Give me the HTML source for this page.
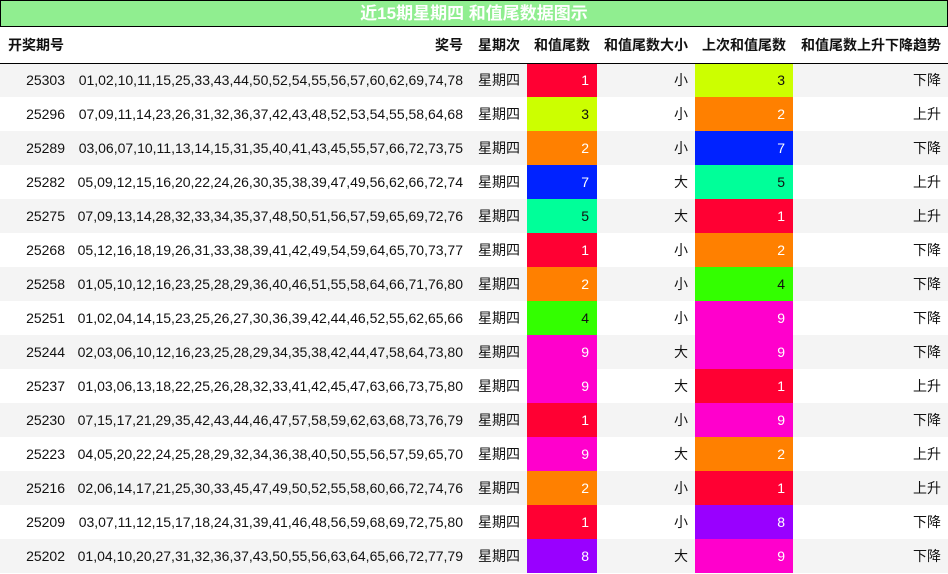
<!DOCTYPE html>
<html><head><meta charset="utf-8"><style>
*{margin:0;padding:0;box-sizing:border-box}
body{width:948px;height:574px;background:#fff;font-family:"Liberation Sans","Noto Sans CJK SC",sans-serif;font-size:14px;color:#111;overflow:hidden}
.t{height:27px;background:#90ee90;border:1px solid #000;color:#fff;font-weight:bold;font-size:17px;text-align:center;line-height:25px}
table{border-collapse:collapse;table-layout:fixed;width:948px}
th{height:36px;font-weight:bold;text-align:right;padding:0 7px 0 0;border-bottom:1px solid #000;font-size:14px}
td{height:34px;text-align:right;padding:0 7px 0 0;white-space:nowrap}
tr.g td{background:#f4f4f4}
td.c{padding-right:8px}
.w{color:#fff}
</style></head><body>
<div class="t">近15期星期四 和值尾数据图示</div>
<table>
<colgroup><col style="width:72px"><col style="width:398px"><col style="width:57px"><col style="width:70px"><col style="width:98px"><col style="width:98px"><col style="width:155px"></colgroup>
<tr><th style="text-align:left;padding-left:8px">开奖期号</th><th>奖号</th><th>星期次</th><th>和值尾数</th><th>和值尾数大小</th><th>上次和值尾数</th><th>和值尾数上升下降趋势</th></tr>
<tr class="g"><td>25303</td><td>01,02,10,11,15,25,33,43,44,50,52,54,55,56,57,60,62,69,74,78</td><td>星期四</td><td class="c w" style="background:#ff0033!important">1</td><td>小</td><td class="c" style="background:#ccff00!important">3</td><td>下降</td></tr>
<tr><td>25296</td><td>07,09,11,14,23,26,31,32,36,37,42,43,48,52,53,54,55,58,64,68</td><td>星期四</td><td class="c" style="background:#ccff00">3</td><td>小</td><td class="c w" style="background:#ff8000">2</td><td>上升</td></tr>
<tr class="g"><td>25289</td><td>03,06,07,10,11,13,14,15,31,35,40,41,43,45,55,57,66,72,73,75</td><td>星期四</td><td class="c w" style="background:#ff8000!important">2</td><td>小</td><td class="c w" style="background:#0022ff!important">7</td><td>下降</td></tr>
<tr><td>25282</td><td>05,09,12,15,16,20,22,24,26,30,35,38,39,47,49,56,62,66,72,74</td><td>星期四</td><td class="c w" style="background:#0022ff">7</td><td>大</td><td class="c" style="background:#00ff99">5</td><td>上升</td></tr>
<tr class="g"><td>25275</td><td>07,09,13,14,28,32,33,34,35,37,48,50,51,56,57,59,65,69,72,76</td><td>星期四</td><td class="c" style="background:#00ff99!important">5</td><td>大</td><td class="c w" style="background:#ff0033!important">1</td><td>上升</td></tr>
<tr><td>25268</td><td>05,12,16,18,19,26,31,33,38,39,41,42,49,54,59,64,65,70,73,77</td><td>星期四</td><td class="c w" style="background:#ff0033">1</td><td>小</td><td class="c w" style="background:#ff8000">2</td><td>下降</td></tr>
<tr class="g"><td>25258</td><td>01,05,10,12,16,23,25,28,29,36,40,46,51,55,58,64,66,71,76,80</td><td>星期四</td><td class="c w" style="background:#ff8000!important">2</td><td>小</td><td class="c" style="background:#33ff00!important">4</td><td>下降</td></tr>
<tr><td>25251</td><td>01,02,04,14,15,23,25,26,27,30,36,39,42,44,46,52,55,62,65,66</td><td>星期四</td><td class="c" style="background:#33ff00">4</td><td>小</td><td class="c w" style="background:#ff00cc">9</td><td>下降</td></tr>
<tr class="g"><td>25244</td><td>02,03,06,10,12,16,23,25,28,29,34,35,38,42,44,47,58,64,73,80</td><td>星期四</td><td class="c w" style="background:#ff00cc!important">9</td><td>大</td><td class="c w" style="background:#ff00cc!important">9</td><td>下降</td></tr>
<tr><td>25237</td><td>01,03,06,13,18,22,25,26,28,32,33,41,42,45,47,63,66,73,75,80</td><td>星期四</td><td class="c w" style="background:#ff00cc">9</td><td>大</td><td class="c w" style="background:#ff0033">1</td><td>上升</td></tr>
<tr class="g"><td>25230</td><td>07,15,17,21,29,35,42,43,44,46,47,57,58,59,62,63,68,73,76,79</td><td>星期四</td><td class="c w" style="background:#ff0033!important">1</td><td>小</td><td class="c w" style="background:#ff00cc!important">9</td><td>下降</td></tr>
<tr><td>25223</td><td>04,05,20,22,24,25,28,29,32,34,36,38,40,50,55,56,57,59,65,70</td><td>星期四</td><td class="c w" style="background:#ff00cc">9</td><td>大</td><td class="c w" style="background:#ff8000">2</td><td>上升</td></tr>
<tr class="g"><td>25216</td><td>02,06,14,17,21,25,30,33,45,47,49,50,52,55,58,60,66,72,74,76</td><td>星期四</td><td class="c w" style="background:#ff8000!important">2</td><td>小</td><td class="c w" style="background:#ff0033!important">1</td><td>上升</td></tr>
<tr><td>25209</td><td>03,07,11,12,15,17,18,24,31,39,41,46,48,56,59,68,69,72,75,80</td><td>星期四</td><td class="c w" style="background:#ff0033">1</td><td>小</td><td class="c w" style="background:#9900ff">8</td><td>下降</td></tr>
<tr class="g"><td>25202</td><td>01,04,10,20,27,31,32,36,37,43,50,55,56,63,64,65,66,72,77,79</td><td>星期四</td><td class="c w" style="background:#9900ff!important">8</td><td>大</td><td class="c w" style="background:#ff00cc!important">9</td><td>下降</td></tr>
</table>
</body></html>
